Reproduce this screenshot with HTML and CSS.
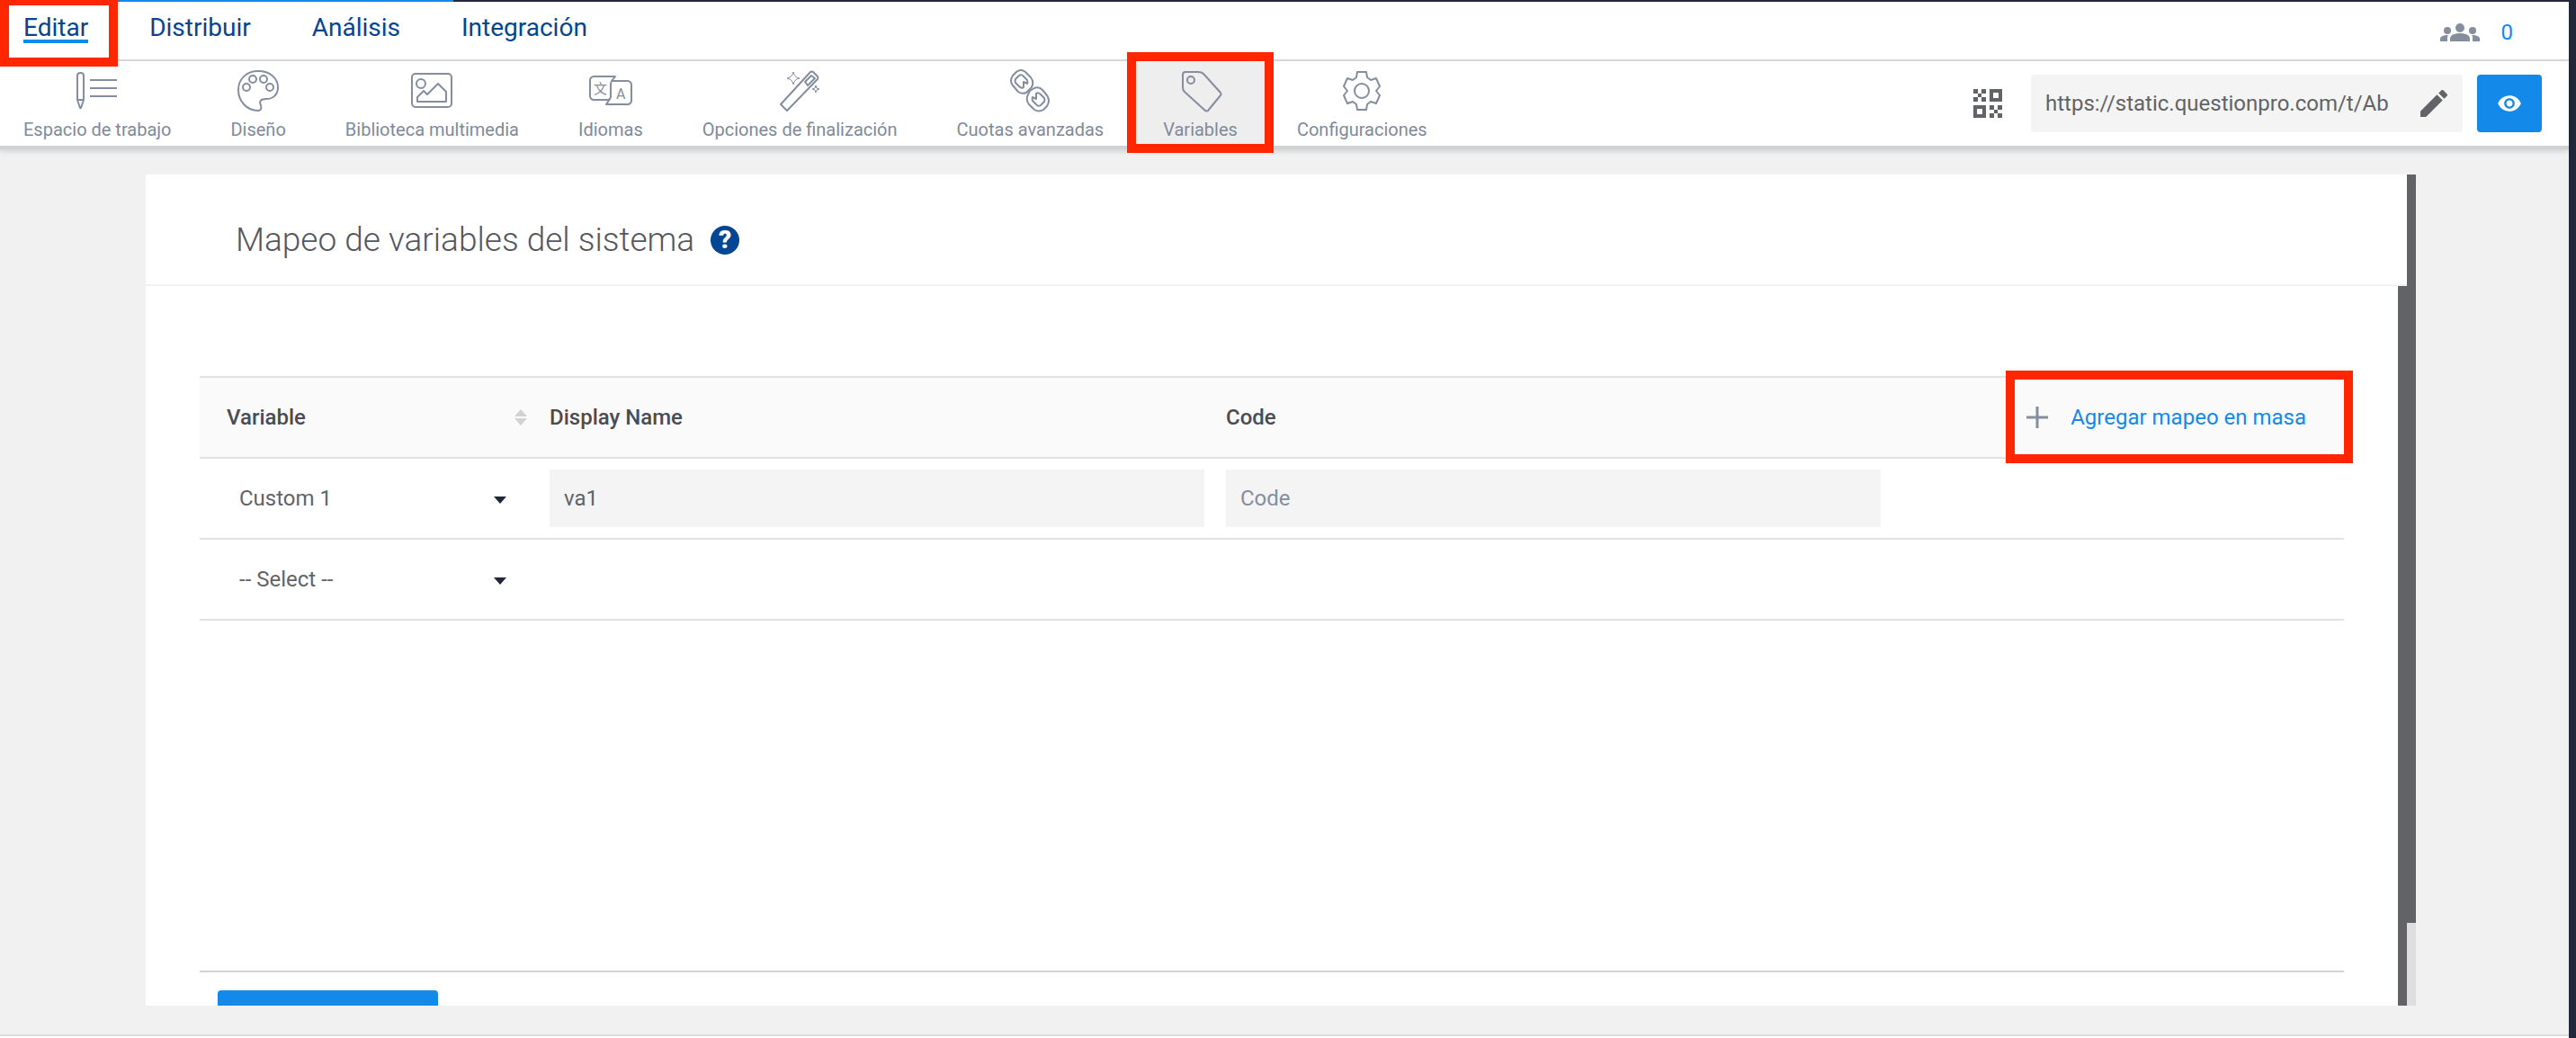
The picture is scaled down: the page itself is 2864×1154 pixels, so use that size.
FILE: index.html
```html
<!DOCTYPE html>
<html lang="es">
<head>
    <meta charset="UTF-8">
    <meta name="viewport" content="width=device-width, initial-scale=1.0">
    <title>Mapeo de variables del sistema</title>
    <link rel="stylesheet" href="styles.css">
</head>
<body>
    <div class="app">
        <div class="progress"><div class="progress-bar"></div></div>

        <header class="topbar">
            <nav class="main-nav">
                <a href="#" class="active">Editar</a>
                <a href="#">Distribuir</a>
                <a href="#">Análisis</a>
                <a href="#">Integración</a>
            </nav>
            <a href="#" class="people">
                <svg width="44" height="22" viewBox="0 0 44 22">
                    <circle cx="22" cy="6" r="5"/>
                    <circle cx="8" cy="9" r="4"/>
                    <circle cx="36" cy="9" r="4"/>
                    <path d="M11 21v-3c0-4 5-6 11-6s11 2 11 6v3z"/>
                    <path d="M0 21v-3c0-2 3-4 9-4-1 1-1 2-1 3v4z"/>
                    <path d="M44 21v-3c0-2-3-4-9-4 1 1 1 2 1 3v4z"/>
                </svg>
                <span>0</span>
            </a>
            <div class="mark mark-edit"></div>
        </header>

        <div class="toolbar">
            <nav class="tools">
                <a href="#">
                    <svg class="icon" viewBox="0 0 48 48">
                        <path d="M2 34V7c0-4 7-4 7 0v27M2 34l3 9h1l3-9z"/>
                        <path d="M16 12h30M16 21h30M16 30h30"/>
                    </svg>
                    <span>Espacio de trabajo</span>
                </a>
                <a href="#">
                    <svg class="icon" viewBox="0 0 48 48">
                        <path d="M24 46C11 46 2 35 2 23 2 10 12 2 24 2c13 0 22 8 22 18 0 9-6 13-13 13-7 0-8 3-6 7 1 4 0 6-3 6z"/>
                        <circle cx="11" cy="20" r="4"/>
                        <circle cx="18" cy="11" r="4"/>
                        <circle cx="30" cy="11" r="4"/>
                        <circle cx="37" cy="20" r="4"/>
                    </svg>
                    <span>Diseño</span>
                </a>
                <a href="#">
                    <svg class="icon" viewBox="0 0 48 48">
                        <rect x="2" y="5" width="44" height="37" rx="4"/>
                        <circle cx="12" cy="16" r="5"/>
                        <path d="M8 31l7-7 4 4 12-12 9 9v11H8z"/>
                    </svg>
                    <span>Biblioteca multimedia</span>
                </a>
                <a href="#">
                    <svg class="icon" viewBox="0 0 48 48">
                        <path d="M5 8h24l-4 5-1 3v14c0 2-1 4-4 4H5c-2 0-4-2-4-4V12c0-2 2-4 4-4z"/>
                        <path d="M26 13h17c2 0 4 2 4 4v18c0 2-2 4-4 4H19l4-6"/>
                        <text class="icon-han" x="5" y="27">文</text>
                        <text class="icon-latin" x="30" y="33">A</text>
                    </svg>
                    <span>Idiomas</span>
                </a>
                <a href="#">
                    <svg class="icon" viewBox="0 0 48 48">
                        <path d="M36 3q2-1 3 0l5 5q1 1 0 3L10 46l-7-7z"/>
                        <path d="M37 7l4 3-8 8-3-4z"/>
                        <path class="thin" d="M17 3q1 6 7 7-6 1-7 7-1-6-7-7 6-1 7-7z"/>
                        <path class="thin" d="M42 18q0 4 4 4-4 0-4 4 0-4-4-4 4 0 4-4z"/>
                    </svg>
                    <span>Opciones de finalización</span>
                </a>
                <a href="#">
                    <svg class="icon" viewBox="0 0 48 48">
                        <path d="M5 7l4-4q5-4 10 0l6 6q4 5 1 11l-2 2-4 4q-5 2-9-1l-6-7q-4-5 0-11z"/>
                        <path d="M12 7q3-2 5 1l4 4q1 3 0 4l-4-2v6q-2 2-5-1l-4-4q-1-2 0-4z"/>
                        <path d="M43 41l-4 4q-5 3-10 0l-6-6q-4-5-1-11l2-4 5-3q5-2 9 2l5 6q4 6 0 12z"/>
                        <path d="M36 40q-3 2-5-1l-4-4q-1-3 0-4l4 2v-6q2-2 5 1l4 4q1 2 0 4z"/>
                    </svg>
                    <span>Cuotas avanzadas</span>
                </a>
                <a href="#" class="selected">
                    <svg class="icon" viewBox="0 0 48 48">
                        <path d="M7 3h14q4 0 6 2l19 21q1 2 0 3L32 46q-1 1-3 0L7 26q-3-2-3-6V6q0-3 3-3z"/>
                        <circle cx="13" cy="12" r="4"/>
                    </svg>
                    <span>Variables</span>
                    <div class="mark mark-variables"></div>
                </a>
                <a href="#">
                    <svg class="icon" viewBox="0 0 48 48">
                        <path d="M19 3h10l1 6 4 3 6-2 4 9-4 5 4 5-4 9-6-2-4 3-1 6H19l-1-6-4-3-6 2-4-9 4-5-4-5 4-9 6 2 4-3z"/>
                        <circle cx="24" cy="24" r="8"/>
                    </svg>
                    <span>Configuraciones</span>
                </a>
            </nav>

            <div class="share">
                <button class="qr-btn" aria-label="QR">
                    <svg width="32" height="32" viewBox="0 0 32 32">
                        <path class="qr-frame" d="M20 2h10v10H20zM2 20h10v10H2z"/>
                        <path d="M0 0h5v5H0zM9 0h5v5H9zM5 5h4v4H5zM0 9h5v5H0zM9 9h5v5H9z"/>
                        <path d="M18 18h5v5h-5zM27 18h5v5h-5zM23 23h4v4h-4zM18 27h5v5h-5zM27 27h5v5h-5z"/>
                    </svg>
                </button>
                <div class="url-box">
                    <input type="text" value="https://static.questionpro.com/t/Ab" aria-label="URL" readonly>
                    <button aria-label="Editar URL">
                        <svg width="40" height="40" viewBox="0 0 24 24">
                            <path d="M3 17.250V21h3.750L17.810 9.940l-3.750-3.750L3 17.250zM20.710 7.040c.39-.39.39-1.020 0-1.410l-2.340-2.340c-.39-.39-1.020-.39-1.410 0l-1.830 1.830 3.750 3.750 1.830-1.830z"/>
                        </svg>
                    </button>
                </div>
                <button class="preview-btn" aria-label="Vista previa">
                    <svg width="28" height="28" viewBox="0 0 24 24">
                        <path d="M12 4.500C7 4.500 2.730 7.610 1 12c1.730 4.390 6 7.500 11 7.500s9.270-3.110 11-7.500c-1.730-4.390-6-7.500-11-7.500zM12 17c-2.760 0-5-2.240-5-5s2.240-5 5-5 5 2.240 5 5-2.240 5-5 5zm0-8c-1.660 0-3 1.340-3 3s1.340 3 3 3 3-1.340 3-3-1.340-3-3-3z"/>
                    </svg>
                </button>
            </div>
        </div>

        <main class="content">
            <section class="panel">
                <div class="panel-head">
                    <h1>Mapeo de variables del sistema</h1>
                    <button class="help-btn" aria-label="Ayuda">?</button>
                </div>
                <div class="panel-body">
                    <div class="panel-scroll">
                        <table class="mapping">
                            <thead>
                                <tr>
                                    <th class="col-variable">
                                        <div class="sortable">
                                            Variable
                                            <svg width="16" height="20" viewBox="0 0 16 20">
                                                <path d="M8 1l7 8H1zM8 19l7-8H1z"/>
                                            </svg>
                                        </div>
                                    </th>
                                    <th>Display Name</th>
                                    <th>Code</th>
                                    <th class="col-action">
                                        <button class="add-btn">
                                            <svg width="26" height="26" viewBox="0 0 26 26">
                                                <path d="M13 1v24M1 13h24"/>
                                            </svg>
                                            Agregar mapeo en masa
                                        </button>
                                        <div class="mark mark-add"></div>
                                    </th>
                                </tr>
                            </thead>
                            <tbody>
                                <tr>
                                    <td class="select-cell">
                                        <select aria-label="Variable 1">
                                            <option>Custom 1</option>
                                        </select>
                                    </td>
                                    <td><input type="text" value="va1" aria-label="Display Name"></td>
                                    <td><input type="text" placeholder="Code" aria-label="Code"></td>
                                    <td></td>
                                </tr>
                                <tr>
                                    <td class="select-cell">
                                        <select aria-label="Variable 2">
                                            <option>-- Select --</option>
                                        </select>
                                    </td>
                                    <td></td>
                                    <td></td>
                                    <td></td>
                                </tr>
                            </tbody>
                        </table>
                        <div class="form-footer">
                            <button class="save-btn" aria-label="Guardar"></button>
                        </div>
                    </div>
                    <div class="scrollbar"></div>
                </div>
            </section>
            <div class="page-scrollbar"><div class="thumb"></div></div>
        </main>
        <footer class="page-end"></footer>
    </div>
</body>
</html>
```
FILE: styles.css
```css
* {
    box-sizing: border-box;
}

body {
    margin: 0;
    font-family: Roboto, "Liberation Sans", sans-serif;
    font-size: 24px;
    color: #545660;
    background-color: #f1f1f1;
}

a {
    text-decoration: none;
}

button {
    padding: 0;
    border: none;
    background: none;
    font: inherit;
    cursor: pointer;
}

input,
select {
    font: inherit;
    color: #626366;
    border: none;
    outline: none;
}

.app {
    display: flex;
    flex-direction: column;
    height: 100vh;
    border-right: 8px solid #222839;
}

.progress {
    flex: none;
    height: 2px;
    background-color: #222839;
}

.progress-bar {
    width: 504px;
    height: 2px;
    background-color: #1389ea;
}

/* red highlight frames */
.mark {
    position: absolute;
    border: 10px solid #ff2600;
    pointer-events: none;
}

/* top navigation */
.topbar {
    position: relative;
    flex: none;
    display: flex;
    justify-content: space-between;
    height: 66px;
    padding: 0 62px 0 26px;
    background-color: #fff;
    border-bottom: 2px solid #dcdcdc;
}

.main-nav {
    display: flex;
    align-items: flex-start;
    gap: 68px;
    padding-top: 13px;
}

.main-nav a {
    font-size: 28px;
    line-height: 32px;
    color: #024694;
}

.main-nav .active {
    height: 33px;
    border-bottom: 4px solid #1389ea;
}

.people {
    display: flex;
    align-items: center;
    gap: 24px;
    padding-top: 3px;
    color: #1389ea;
}

.people svg {
    fill: #848e9e;
}

.mark-edit {
    left: 0;
    top: -2px;
    width: 131px;
    height: 74px;
    border-top-width: 6px;
    z-index: 2;
}

/* toolbar */
.toolbar {
    position: relative;
    flex: none;
    display: flex;
    justify-content: space-between;
    height: 98px;
    padding-right: 30px;
    background-color: #fff;
    border-bottom: 4px solid #d0d2d3;
    box-shadow: 0 2px 6px rgba(0, 0, 0, 0.15);
}

.tools {
    display: flex;
}

.tools a {
    position: relative;
    display: flex;
    flex-direction: column;
    align-items: center;
    padding: 9px 33px 0;
    font-size: 20px;
    line-height: 24px;
    white-space: nowrap;
    color: #7f8a9b;
}

.tools a:first-child {
    padding-left: 26px;
}

.tools .selected {
    background-color: #eeeeee;
}

.tools span {
    margin-top: 7px;
}

.icon {
    width: 48px;
    height: 48px;
    fill: none;
    stroke: #848e9e;
    stroke-width: 2;
    stroke-linejoin: round;
}

.icon .thin {
    stroke-width: 1;
}

.icon text {
    fill: #848e9e;
    stroke: none;
}

.icon-han {
    font-family: "Noto Sans CJK SC", sans-serif;
    font-size: 15px;
}

.icon-latin {
    font-size: 16px;
}

.mark-variables {
    top: -10px;
    bottom: -8px;
    left: -7px;
    right: -7px;
}

.share {
    display: flex;
    align-items: center;
    gap: 16px;
}

.qr-btn {
    display: flex;
    margin-right: 16px;
}

.qr-btn svg {
    fill: #626366;
}

.qr-btn .qr-frame {
    fill: none;
    stroke: #626366;
    stroke-width: 4;
}

.url-box {
    display: flex;
    align-items: center;
    width: 480px;
    height: 64px;
    padding: 0 12px 0 16px;
    background-color: #f4f4f4;
    border-radius: 4px;
}

.url-box input {
    flex: 1;
    min-width: 0;
    padding: 0;
    background: none;
}

.url-box button {
    display: flex;
}

.url-box svg {
    fill: #626366;
}

.preview-btn {
    display: flex;
    align-items: center;
    justify-content: center;
    width: 72px;
    height: 64px;
    background-color: #1389ea;
    border-radius: 4px;
}

.preview-btn svg {
    fill: #fff;
}

/* content panel */
.content {
    flex: 1;
    min-height: 0;
    display: flex;
    padding: 28px 170px 32px 162px;
}

.panel {
    flex: 1;
    display: flex;
    flex-direction: column;
    background-color: #fff;
}

.panel-head {
    display: flex;
    align-items: center;
    gap: 18px;
    padding: 52px 100px 28px;
    border-bottom: 2px solid #f1f1f1;
}

h1 {
    margin: 0;
    font-size: 37px;
    font-weight: 300;
    line-height: 42px;
}

.help-btn {
    width: 32px;
    height: 32px;
    background-color: #024694;
    border-radius: 50%;
    color: #fff;
    font-size: 28px;
    font-weight: 900;
    line-height: 32px;
}

.panel-body {
    flex: 1;
    min-height: 0;
    display: flex;
}

.panel-scroll {
    flex: 1;
    overflow: hidden;
    padding: 100px 60px 0;
}

.scrollbar {
    width: 10px;
    background-color: #626366;
}

.page-scrollbar {
    width: 10px;
    background-color: #dedede;
}

.thumb {
    height: 90%;
    background-color: #626366;
}

/* mapping table */
.mapping {
    width: 100%;
    table-layout: fixed;
    border-collapse: separate;
    border-spacing: 0;
    border-top: 2px solid #e2e2e2;
}

.mapping th,
.mapping td {
    height: 90px;
    padding: 0 24px 0 0;
    border-bottom: 2px solid #e2e2e2;
    text-align: left;
}

.mapping th {
    background-color: #fafafa;
    font-weight: 500;
    color: #4a4c55;
}

.mapping .col-variable {
    width: 389px;
    padding-left: 30px;
}

.sortable {
    display: flex;
    align-items: center;
    justify-content: space-between;
}

.sortable svg {
    fill: #d0d2d3;
}

.mapping .col-action {
    position: relative;
    width: 491px;
    padding: 0;
}

.mapping input {
    display: block;
    width: 100%;
    height: 64px;
    padding: 0 16px;
    background-color: #f4f4f4;
}

.mapping input::placeholder {
    color: #848e9e;
    opacity: 1;
}

.mapping .select-cell {
    position: relative;
}

.select-cell::after {
    content: "";
    position: absolute;
    right: 48px;
    top: 42px;
    border: 7px solid transparent;
    border-top: 8px solid #222839;
    border-bottom: 0;
    pointer-events: none;
}

.select-cell select {
    width: 100%;
    height: 64px;
    padding: 0 44px;
    appearance: none;
    background: none;
}

.add-btn {
    display: flex;
    align-items: center;
    gap: 24px;
    margin-left: auto;
    padding-right: 42px;
    font-weight: 400;
    white-space: nowrap;
    color: #1389ea;
}

.add-btn svg {
    fill: none;
    stroke: #848e9e;
    stroke-width: 3;
}

.mark-add {
    top: -8px;
    right: -10px;
    width: 386px;
    height: 103px;
}

.form-footer {
    margin-top: 389px;
    padding: 20px;
    border-top: 2px solid #d0d2d3;
}

.save-btn {
    width: 245px;
    height: 64px;
    background-color: #1389ea;
    border-radius: 4px;
}

.page-end {
    flex: none;
    height: 4px;
    background-color: #fff;
    border-top: 2px solid #dcdcdc;
}
```
